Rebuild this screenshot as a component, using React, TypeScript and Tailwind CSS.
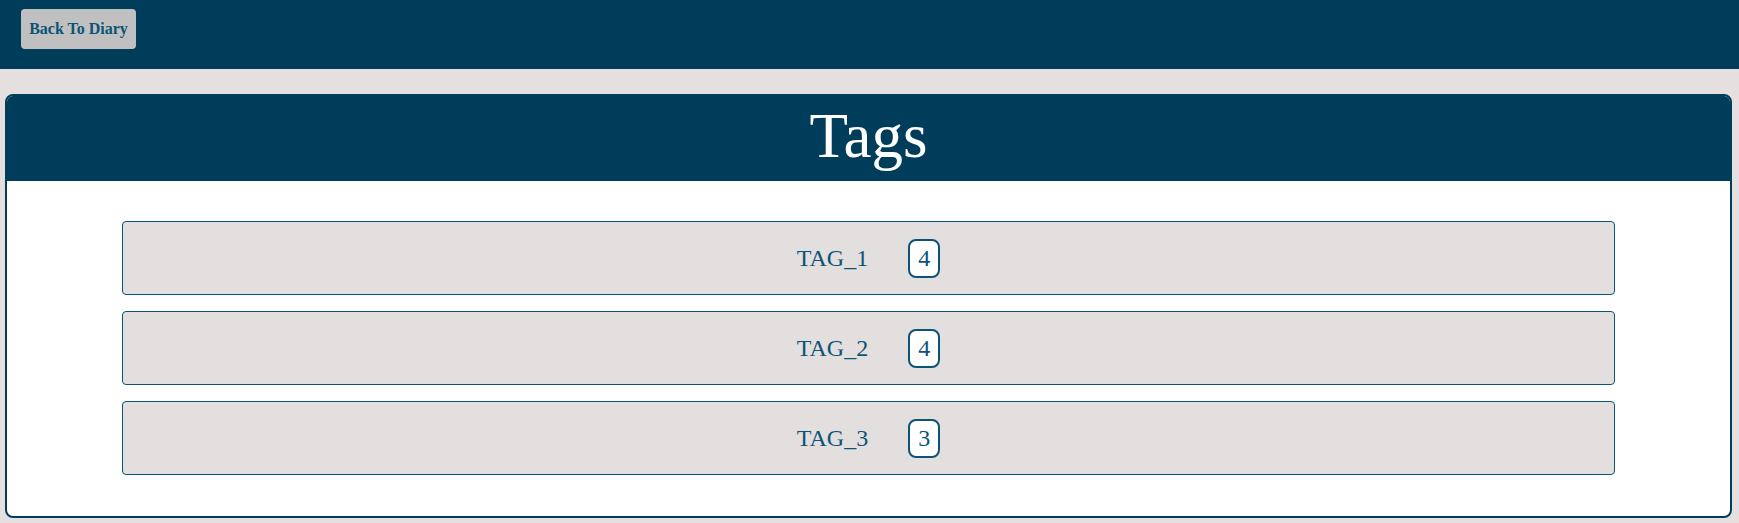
const tags = [
  { name: 'TAG_1', count: 4 },
  { name: 'TAG_2', count: 4 },
  { name: 'TAG_3', count: 3 },
];

export default function App() {
  return (
    <div className="min-h-[523px] bg-[#e5dfdf] font-['Liberation_Serif',serif]">
      {/* top bar */}
      <div className="h-[69px] bg-[#003d5b] pl-[21px] pt-[9px]">
        <button className="h-[40px] w-[115px] rounded-[4px] bg-[#c0c0c0] text-[16px] font-bold text-[#0b5477]">
          Back To Diary
        </button>
      </div>

      {/* tags card */}
      <div className="mt-[25px] ml-[5px] mr-[7px] overflow-hidden rounded-[8px] border-2 border-[#003d5b] bg-white">
        <div className="flex h-[85px] items-center justify-center bg-[#003d5b]">
          <h1 className="pb-[4px] text-[63px] leading-none text-white">Tags</h1>
        </div>
        <div className="flex flex-col gap-[16px] px-[115px] pt-[40px] pb-[41px]">
          {tags.map(t => (
            <div
              key={t.name}
              className="flex h-[74px] items-center justify-center rounded-[4px] border border-[#0b5477] bg-[#e4dfdf]"
            >
              <span className="text-[24px] text-[#0b5477]">{t.name}</span>
              <span className="ml-[40px] flex h-[39px] w-[32px] items-center justify-center rounded-[8px] border-2 border-[#0b5477] bg-white text-[24px] text-[#0b5477]">
                {t.count}
              </span>
            </div>
          ))}
        </div>
      </div>
    </div>
  );
}
